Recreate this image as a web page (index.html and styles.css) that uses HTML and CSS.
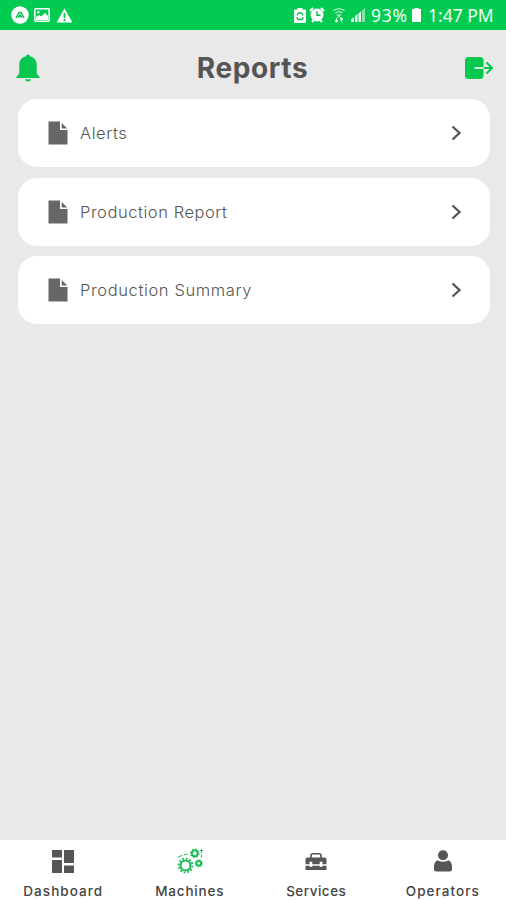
FILE: index.html
```html
<!DOCTYPE html>
<html lang="en">
<head>
<meta charset="utf-8">
<title>Reports</title>
<link rel="stylesheet" href="styles.css">
</head>
<body>
<div class="status">
  <div class="status-left">
    <svg width="18" height="18" viewBox="0 0 18 18"><circle cx="9" cy="9" r="8.700" fill="#fff"/><path d="M5 12 8 6.500h2L13 12M7.200 11.500 9 9l1.800 2.500" fill="none" stroke="#08bd50" stroke-width="1.500"/></svg>
    <svg width="16" height="14" viewBox="0 0 16 14"><rect x=".8" y=".8" width="14.400" height="12.400" rx="1" fill="none" stroke="#fff" stroke-width="1.600"/><path d="M2 12V9l3-2 2 1.500L11 5l3 3v4z" fill="#fff"/><circle cx="4.300" cy="4.200" r="1.200" fill="#fff"/></svg>
    <svg width="17" height="15" viewBox="0 0 17 15"><path d="M8.500.500 16.500 14.500H.500z" fill="#fff"/><path d="M8.500 5v5M8.500 11v2" stroke="#08bd50" stroke-width="1.700"/></svg>
  </div>
  <div class="status-right">
    <svg width="12" height="15" viewBox="0 0 12 15"><path d="M3.500 0h5v1.500H11q1 0 1 1V14q0 1-1 1H1q-1 0-1-1V2.500q0-1 1-1h2.500z" fill="#fff"/><path d="M3 7.500 4.500 5h3L9 7.500M9.300 9 8 11.500H4L2.700 9" fill="none" stroke="#08bd50" stroke-width="1.300"/></svg>
    <svg class="clock" width="16" height="16" viewBox="0 0 16 16"><circle cx="8" cy="8" r="5.300" fill="#fff" stroke="#fff" stroke-width="2.400"/><path d="M1 4 4 1M12 1l3 3M3 15l2-2M13 15l-2-2" stroke="#fff" stroke-width="2.200"/><path d="M8 4.500V8.300h3.500" fill="none" stroke="#08bd50" stroke-width="1.500"/></svg>
    <svg class="wifi" width="12" height="15" viewBox="0 0 12 15"><g fill="none" stroke="#d6f8df" stroke-width="1.200"><path d="M.5 2.500Q6-1 11.500 2.500M2.500 5Q6 2.500 9.500 5"/><path d="M4 6.500 8 9.500M8 6.500 4 9.500M3.500 14V10M2 12.500 3.500 14 5 12.500M8.500 14v-4M7 11.500 8.500 10 10 11.500"/></g></svg>
    <svg class="signal" width="14" height="14" viewBox="0 0 14 14"><path d="M0 14v-2.500L3 9v5zM4 14V8l2.500-2v8zM7.500 14V5.500L10 3v11z" fill="#e6faeb"/><path d="M11 14V2.500L14 0v14z" fill="#8be2a9"/></svg>
    <span class="percent">93%</span>
    <svg class="battery" width="9" height="14" viewBox="0 0 9 14"><path d="M2.500 0h4v1H9v13H0V1h2.500z" fill="#fff"/></svg>
    <span class="time">1:47 PM</span>
  </div>
</div>
<header class="header">
  <svg class="bell" width="24" height="28" viewBox="0 0 24 28"><path d="M12 .5c1.200 0 1.900.7 2 1.800 4 .9 6.700 4 6.700 8.200v7.500c0 2 .8 3.300 2.800 4.200V24H.5v-1.800c2-.9 2.800-2.200 2.800-4.200v-7.500C3.300 6.300 6 3.200 10 2.300 10.100 1.200 10.800.5 12 .5zM9 25.300h6c-.5 3-5.500 3-6 0z" fill="#08c751"/></svg>
  <h1 class="title">Reports</h1>
  <svg class="logout" width="28" height="22" viewBox="0 0 28 22"><rect width="18.500" height="22" rx="3.500" fill="#08c751"/><path d="M9.500 11H19" stroke="#c6efd2" stroke-width="2"/><path d="M19 11h7.500M21.500 5.500 27 11l-5.500 5.500" fill="none" stroke="#08c751" stroke-width="2"/></svg>
</header>
<main class="list">
  <div class="card">
    <svg class="doc" width="20" height="24" viewBox="0 0 20 24"><path d="M.5.500H12V9h7.500v14.500H.5zM13.700 2 19.300 7.500h-5.600z" fill="#666"/></svg>
    <span class="name alerts">Alerts</span>
    <svg class="chev" width="11" height="16" viewBox="0 0 11 16"><path d="M1.500 1.500 8.500 8l-7 6.500" fill="none" stroke="#555" stroke-width="2.300"/></svg>
  </div>
  <div class="card">
    <svg class="doc" width="20" height="24" viewBox="0 0 20 24"><path d="M.5.500H12V9h7.500v14.500H.5zM13.700 2 19.300 7.500h-5.600z" fill="#666"/></svg>
    <span class="name report">Production Report</span>
    <svg class="chev" width="11" height="16" viewBox="0 0 11 16"><path d="M1.500 1.500 8.500 8l-7 6.500" fill="none" stroke="#555" stroke-width="2.300"/></svg>
  </div>
  <div class="card">
    <svg class="doc" width="20" height="24" viewBox="0 0 20 24"><path d="M.5.500H12V9h7.500v14.500H.5zM13.700 2 19.300 7.500h-5.600z" fill="#666"/></svg>
    <span class="name summary">Production Summary</span>
    <svg class="chev" width="11" height="16" viewBox="0 0 11 16"><path d="M1.500 1.500 8.500 8l-7 6.500" fill="none" stroke="#555" stroke-width="2.300"/></svg>
  </div>
</main>
<nav class="nav">
  <div class="tab">
    <svg width="28" height="28" viewBox="0 0 28 28"><path d="M3 3h10v7.500H3zM15 3h10v13H15zM3 13h10v13H3zM15 18.500h10V26H15z" fill="#555"/></svg>
    <span class="label dashboard">Dashboard</span>
  </div>
  <div class="tab">
    <svg width="28" height="28" viewBox="0 0 28 28"><g fill="none" stroke="#18bc55"><circle cx="9.500" cy="18.500" r="5" stroke-width="2.200"/><circle cx="9.500" cy="18.500" r="7" stroke-width="1.700" stroke-dasharray="1.900 1.765"/><circle cx="18.800" cy="6.300" r="3" stroke-width="2.100"/><circle cx="18.800" cy="6.300" r="4.400" stroke-width="1" stroke-dasharray="1.500 1.950"/><circle cx="22.800" cy="16.300" r="2.400" stroke-width="2"/><circle cx="22.800" cy="16.300" r="3.600" stroke-width=".9" stroke-dasharray="1.200 1.620"/><path d="M2 10.500 6 8.300M7.500 8 11.500 7M25.500 3v3M25.500 7.500v3M24 4l1.500-1.500L27 4" stroke-width="1"/></g></svg>
    <span class="label machines">Machines</span>
  </div>
  <div class="tab">
    <svg width="28" height="28" viewBox="0 0 28 28"><path d="M9 11V8.500Q9 6.700 11 6.700h6q2 0 2 1.800V11" fill="none" stroke="#555" stroke-width="1.600"/><path d="M5.500 10.500h17q1.500 0 2 1.500v5.300h-4v-2.500h-2.800v2.500h-7.400v-2.500H7.500v2.500h-4V12q.5-1.500 2-1.500zM3.500 18.700h4v1h2.800v-1h7.400v1h2.800v-1h4V23h-21z" fill="#555"/></svg>
    <span class="label services">Services</span>
  </div>
  <div class="tab">
    <svg width="28" height="28" viewBox="0 0 28 28"><circle cx="14" cy="8.200" r="5" fill="#555"/><path d="M8.500 13.200Q14 16.500 19.500 13.200 23 15 23 19.500V22q0 2.500-2.500 2.500h-13Q5 24.500 5 22v-2.500Q5 15 8.500 13.200z" fill="#555"/></svg>
    <span class="label operators">Operators</span>
  </div>
</nav>
</body>
</html>
```

FILE: styles.css
```css
* { box-sizing: border-box; }
svg { display: block; flex: none; }
body {
  margin: 0;
  height: 900px;
  display: flex;
  flex-direction: column;
  background: #e9e9e9;
  color: #555;
  font-family: Inter, sans-serif;
  overflow: hidden;
}
.status {
  height: 30px;
  flex: none;
  display: flex;
  align-items: center;
  justify-content: space-between;
  padding: 0 12px 0 11px;
  background: #02cb51;
  color: #f2fff5;
  font: 17.5px/30px "Noto Sans", sans-serif;
}
.status-left { display: flex; align-items: center; gap: 5px; }
.status-left svg:last-child { margin-left: 1px; }
.status-right { display: flex; align-items: center; }
.clock { margin-left: 3px; }
.wifi { margin-left: 8px; }
.signal { margin-left: 6px; }
.percent { margin-left: 6px; width: 38px; letter-spacing: 0.8px; }
.battery { margin-left: 3px; }
.time { margin-left: 7px; width: 66px; white-space: nowrap; }
.header {
  height: 69px;
  flex: none;
  display: flex;
  align-items: center;
  justify-content: space-between;
  padding: 6px 13px 0 16px;
}
.title {
  margin: 0;
  font-size: 28px;
  line-height: 36px;
  font-weight: 700;
  letter-spacing: 0.6px;
}
.list {
  flex: 1;
  display: flex;
  flex-direction: column;
  gap: 10.5px;
  padding: 0 16px 0 18px;
}
.card {
  height: 68px;
  display: flex;
  align-items: center;
  padding: 0 28px 0 31px;
  border-radius: 19px;
  background: #fff;
}
.doc { margin-left: -1px; }
.name { margin-left: 12px; font-size: 16.5px; font-weight: 300; letter-spacing: 0.55px; }
.summary { letter-spacing: 0.62px; }
.chev { margin-left: auto; }
.nav {
  height: 60px;
  flex: none;
  display: flex;
  background: #fff;
}
.tab {
  flex: 1;
  display: flex;
  flex-direction: column;
  align-items: center;
  padding-top: 7px;
  color: #444;
}
.label { margin-top: 7px; font-size: 13.5px; line-height: 18px; font-weight: 500; }
.dashboard, .operators { letter-spacing: 1.05px; }
.machines { letter-spacing: 0.8px; }
.services { letter-spacing: 0.5px; }
```
